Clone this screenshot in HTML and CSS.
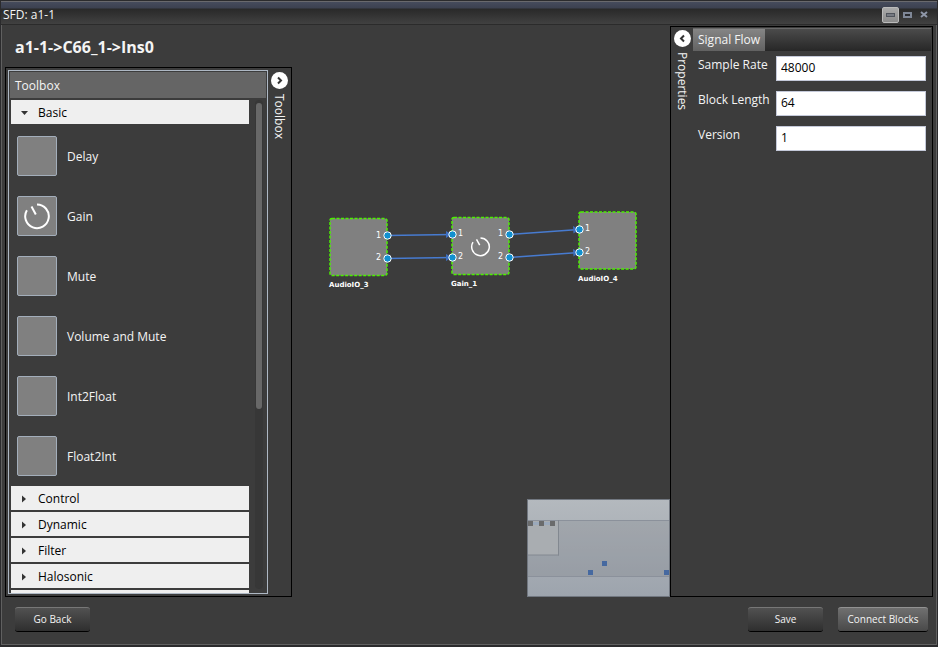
FILE: index.html
```html
<!DOCTYPE html>
<html lang="en">
<head>
<meta charset="utf-8">
<title>SFD: a1-1</title>
<link rel="stylesheet" href="styles.css">
</head>
<body>
<div class="window">
  <header class="titlebar">
    <span class="title">SFD: a1-1</span>
    <div class="controls">
      <button class="control raised" aria-label="Minimize"><svg width="9" height="4"><rect x=".5" y=".5" width="8" height="3" fill="#777b83" stroke="#50545c"/></svg></button>
      <button class="control" aria-label="Maximize"><svg width="9" height="7"><rect x="1" y="1" width="7" height="4" fill="#292b30" stroke="#7f8797" stroke-width="2"/></svg></button>
      <button class="control" aria-label="Close"><svg width="9" height="8"><path d="M1 1l6 5M7 1L1 6" stroke="#8e96a7" stroke-width="2"/></svg></button>
    </div>
  </header>
  <main class="workspace">
    <div class="left">
      <h1>a1-1-&gt;C66_1-&gt;Ins0</h1>
      <section class="dock toolbox-dock">
        <div class="toolbox">
          <h2>Toolbox</h2>
          <div class="scroller">
            <div class="groups">
              <button class="group"><svg class="arrow" width="7" height="6"><path d="M0 1h7L3.500 5z"/></svg>Basic</button>
              <ul class="blocks">
                <li><span class="tile"></span><span class="block-name">Delay</span></li>
                <li><span class="tile"><svg width="28" height="28" viewBox="0 0 28 28"><path d="M14 2.500A11.800 11.800 0 1 1 3.900 8.200M8.500 4.500l4.300 8" class="dial"/></svg></span><span class="block-name">Gain</span></li>
                <li><span class="tile"></span><span class="block-name">Mute</span></li>
                <li><span class="tile"></span><span class="block-name">Volume and Mute</span></li>
                <li><span class="tile"></span><span class="block-name">Int2Float</span></li>
                <li><span class="tile"></span><span class="block-name">Float2Int</span></li>
              </ul>
              <button class="group"><svg class="arrow" width="7" height="8"><path d="M1 0.500v7L5 4z"/></svg>Control</button>
              <button class="group"><svg class="arrow" width="7" height="8"><path d="M1 0.500v7L5 4z"/></svg>Dynamic</button>
              <button class="group"><svg class="arrow" width="7" height="8"><path d="M1 0.500v7L5 4z"/></svg>Filter</button>
              <button class="group"><svg class="arrow" width="7" height="8"><path d="M1 0.500v7L5 4z"/></svg>Halosonic</button>
              <div class="group next"></div>
            </div>
            <div class="track"><div class="thumb"></div></div>
          </div>
        </div>
        <div class="rail">
          <button class="toggle" aria-label="Collapse toolbox"><svg width="17" height="17"><circle cx="8.500" cy="8.500" r="8.500" fill="#fff"/><path d="M7 5.500l3 3-3 3" class="chevron"/></svg></button>
          <span class="rail-label">Toolbox</span>
        </div>
      </section>
    </div>
    <section class="canvas">
      <svg class="diagram" width="378" height="300" viewBox="292 26 378 300">
        <g class="box">
          <rect x="330" y="218.500" width="57" height="57" rx="2"/>
          <rect x="452" y="217.500" width="57" height="57" rx="2"/>
          <rect x="579" y="212" width="57" height="57" rx="2"/>
        </g>
        <g class="wire">
          <path d="M387 235.500L452 234.500M387 258.500L452 257.500M509 234.500L579 229.500M509 257.500L579 252.500"/>
          <path class="head" d="M446 231l6 3.500-6 3.500zM446 254l6 3.500-6 3.500zM573 226l6 3.500-5.500 4zM573 249l6 3.500-5.500 4z"/>
        </g>
        <g class="port">
          <circle cx="387.500" cy="235.500" r="3.700"/><circle cx="387.500" cy="258.500" r="3.700"/>
          <circle cx="452.500" cy="234.500" r="3.700"/><circle cx="452.500" cy="257.500" r="3.700"/>
          <circle cx="509.500" cy="234.500" r="3.700"/><circle cx="509.500" cy="257.500" r="3.700"/>
          <circle cx="579.500" cy="229.500" r="3.700"/><circle cx="579.500" cy="252.500" r="3.700"/>
        </g>
        <path d="M480.500 238A8.800 8.800 0 1 1 473 242.200M476.500 239.300l3.200 5.900" class="dial small"/>
        <g class="number">
          <text x="376" y="238">1</text><text x="376" y="260">2</text>
          <text x="458" y="236">1</text><text x="458" y="259">2</text>
          <text x="498" y="236">1</text><text x="498" y="259">2</text>
          <text x="585" y="231">1</text><text x="585" y="254">2</text>
        </g>
        <g class="name">
          <text x="329" y="287">AudioIO_3</text>
          <text x="451" y="286">Gain_1</text>
          <text x="578" y="281">AudioIO_4</text>
        </g>
      </svg>
      <svg class="minimap" width="143" height="98">
        <defs><linearGradient id="haze" x1="0" y1="0" x2="0" y2="1"><stop offset="0" stop-color="#b4b9be"/><stop offset="1" stop-color="#9da4ad"/></linearGradient></defs>
        <rect x=".5" y=".5" width="142" height="97" fill="url(#haze)" stroke="#717780"/>
        <rect x="1" y="21" width="141" height="56" fill="#7d8288" fill-opacity=".28"/>
        <path d="M1 21.500h141M1 77.500h141" stroke="#8b919b"/>
        <rect x="1" y="22" width="31" height="34" fill="#a9adb1"/>
        <path d="M31.500 21v35.500M1 56h31" fill="none" stroke="#828890"/>
        <path d="M5 24.500h20" stroke="#9ba9bb" stroke-width="3"/>
        <path d="M1 22h5v5H1zM12 22h5v5h-5zM23 22h5v5h-5z" fill="#6a6b6c"/>
        <path d="M75 62h5v5h-5zM61 71h5v5h-5zM137 71h5v5h-5z" fill="#4669a0"/>
      </svg>
    </section>
    <aside class="dock properties">
      <div class="rail">
        <button class="toggle" aria-label="Collapse properties"><svg width="17" height="17"><circle cx="8.500" cy="8.500" r="8.500" fill="#fff"/><path d="M10 5.500l-3 3 3 3" class="chevron"/></svg></button>
        <span class="rail-label">Properties</span>
      </div>
      <div class="property-body">
        <div class="tabs"><button class="tab">Signal Flow</button></div>
        <form class="fields">
          <label for="rate">Sample Rate</label><input id="rate" value="48000">
          <label for="length">Block Length</label><input id="length" value="64">
          <label for="version">Version</label><input id="version" value="1">
        </form>
      </div>
    </aside>
  </main>
  <footer class="actions">
    <button class="action">Go Back</button>
    <button class="action push">Save</button>
    <button class="action primary">Connect Blocks</button>
  </footer>
</div>
</body>
</html>
```
FILE: styles.css
```css
* { box-sizing: border-box; }
body {
  margin: 0;
  background: #2b2b2d;
  color: #f4f4f4;
  font: 12px/16px "Open Sans", "Noto Sans", sans-serif;
}
button { font: inherit; color: inherit; border: 0; padding: 0; background: none; }
svg { display: block; flex: none; }
.window {
  height: 100vh;
  display: flex;
  flex-direction: column;
  padding: 1px 1px 2px;
  overflow: hidden;
}
.titlebar {
  height: 24px;
  flex: none;
  display: flex;
  align-items: center;
  justify-content: space-between;
  padding: 4px 4px 0 2px;
  border-top: 1px solid #69696d;
  border-bottom: 1px solid #2b2b2b;
  background: linear-gradient(#454b5c 0, #3c4150 6px, #292929 7px, #414141);
}
.controls { display: flex; align-items: center; }
.control { width: 17px; height: 16px; display: grid; place-items: center; }
.raised {
  border: 1px solid #bbb;
  border-radius: 2px;
  background: linear-gradient(#aaa, #8b8b8b);
}
.workspace {
  flex: 1;
  min-height: 0;
  display: flex;
  padding: 1px 3px 0 3px;
  background: #3c3c3c;
  border: solid #606060;
  border-width: 0 1px;
}
.left { width: 287px; flex: none; display: flex; flex-direction: column; }
h1 {
  margin: 0;
  height: 41px;
  padding-left: 10px;
  font-size: 16px;
  line-height: 42px;
  font-weight: 700;
}
.dock { border: 1px solid #000; background: #3c3c3c; display: flex; }
.toolbox-dock { flex: 1; min-height: 0; padding: 2px; }
.toolbox {
  width: 260px;
  flex: none;
  display: flex;
  flex-direction: column;
  border: 1px solid #aeb8c4;
  padding: 1px 1px 0;
}
h2 {
  margin: 0;
  height: 26px;
  flex: none;
  padding-left: 5px;
  background: #656565;
  font-size: 12px;
  line-height: 28px;
  font-weight: 400;
}
.scroller { flex: 1; min-height: 0; display: flex; padding: 2px 3px 0 1px; justify-content: space-between; overflow: hidden; }
.groups { width: 238px; }
.group {
  width: 100%;
  height: 24px;
  display: flex;
  align-items: center;
  gap: 7px;
  padding: 2px 0 0 10px;
  margin-bottom: 2px;
  background: #efefef;
  color: #000;
  font-weight: 500;
}
.arrow { margin-right: 3px; fill: #333; }
.blocks { list-style: none; margin: 0; padding: 10px 0 10px 6px; display: grid; gap: 20px; }
.blocks li { display: flex; align-items: center; gap: 10px; height: 40px; }
.block-name { padding-top: 2px; }
.tile {
  width: 40px;
  height: 40px;
  display: grid;
  place-items: center;
  border: 1px solid #a3aebb;
  border-radius: 2px;
  background: #808080;
}
.dial { fill: none; stroke: #fff; stroke-width: 2; }
.small { stroke-width: 1.500; }
.track { width: 8px; margin: 0 0 4px; background: #373737; border-radius: 4px; padding: 3px 1px 0; }
.thumb { height: 63%; background: #686868; border-radius: 3px; }
.rail { width: 21px; display: flex; flex-direction: column; align-items: center; gap: 5px; flex: none; }
.toolbox-dock .rail { width: 22px; }
.toggle { width: 17px; height: 17px; margin-top: 2px; }
.chevron { fill: none; stroke: #333; stroke-width: 2; }
.rail-label { writing-mode: vertical-rl; }
.canvas { flex: 1; min-width: 0; position: relative; overflow: hidden; }
.diagram { position: absolute; left: 0; top: 0; }
.box rect { fill: #808080; stroke: #4cf000; stroke-width: 1.500; stroke-dasharray: 3 1.500; }
.wire { fill: none; stroke: #477bd0; stroke-width: 1.500; }
.wire .head { fill: #3d6ebf; stroke: none; }
.port { fill: #1190cf; stroke: #fff; }
.number, .name { fill: #fff; font: 8px "DejaVu Sans", sans-serif; }
.name { font-size: 7px; font-weight: 700; }
.minimap { position: absolute; right: 0; bottom: 0; }
.properties { width: 263px; flex: none; padding: 0 1px 1px 0; }
.properties .rail { width: 22px; padding-top: 1px; }
.property-body { flex: 1; min-width: 0; padding-top: 1px; }
.tabs {
  height: 23px;
  border-top: 1px solid #686868;
  background: linear-gradient(#4b4b4b, #272727);
  display: flex;
}
.tab { padding: 0 5px; background: linear-gradient(#858585, #626262); }
.fields {
  display: grid;
  grid-template-columns: 78px 1fr;
  row-gap: 10px;
  padding: 5px 5px 0;
}
.fields label { padding-top: 1px; }
.fields input {
  width: 100%;
  min-width: 0;
  height: 25px;
  border: 1px solid #c4c9d9;
  padding: 0 4px 2px;
  background: #fff;
  color: #000;
  font: inherit;
}
.actions {
  height: 48px;
  flex: none;
  display: flex;
  align-items: flex-start;
  gap: 15px;
  padding: 10px 8px 0 13px;
  background: #3c3c3c;
  border: 1px solid #606060;
  border-top: 0;
  font-size: 10px;
}
.action {
  width: 75px;
  height: 25px;
  border-top: 1px solid #777;
  border-bottom: 1px solid #000;
  border-radius: 3px;
  padding-bottom: 1px;
  background: linear-gradient(#515151, #2f2f2f);
}
.push { margin-left: auto; }
.primary { width: 90px; background: linear-gradient(#707070, #494949); border-top-color: #929292; }
```
